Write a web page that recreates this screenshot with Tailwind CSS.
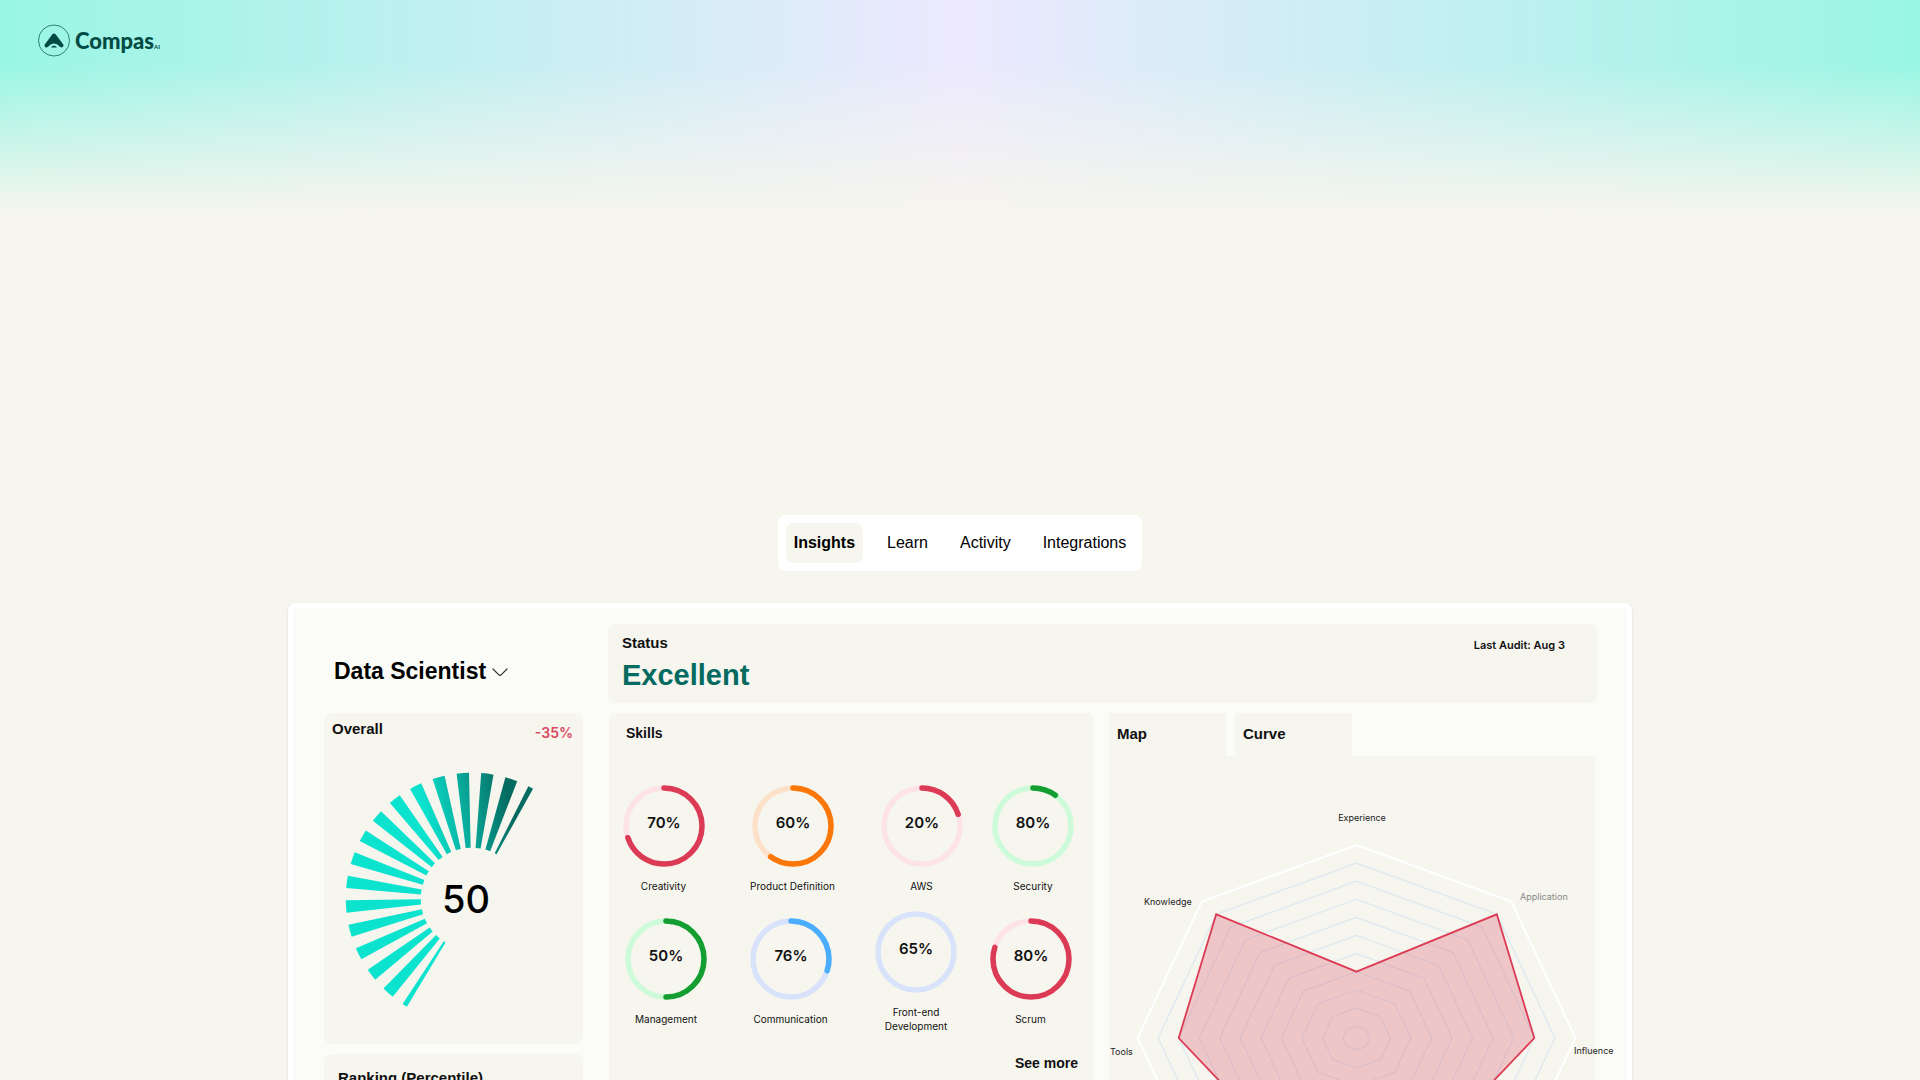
<!DOCTYPE html>
<html lang="en">
  <head>
    <meta charset="UTF-8" />
    <meta name="viewport" content="width=device-width, initial-scale=1.0" />
    <script src="https://cdn.jsdelivr.net/npm/@tailwindcss/browser@4"></script>
    <title>Compas AI</title>
  </head>
  <body class="bg-[#f6f5ee] font-['Liberation_Sans',sans-serif] text-black">
    <div class="h-[515px] bg-[linear-gradient(to_bottom,transparent_65px,#f6f5ee_213px),linear-gradient(to_right,#99f6e4,#ede9fe,#99f6e4)]">
      <header class="flex items-center px-[37px] py-6">
        <a href="#" class="flex items-center gap-1 text-[#024b45]">
          <svg class="size-[34px]" viewBox="0 0 34 34" fill="none">
            <circle cx="17" cy="16.5" r="15.5" stroke="currentColor" stroke-width="0.7" />
            <path d="M9.5 21.5 17 11.5 24.5 21.5Q17 13.5 9.5 21.5z" fill="currentColor" stroke="currentColor" stroke-width="4" stroke-linecap="round" stroke-linejoin="round" />
            <path d="M14.2 23.6c.6-2.6 5-2.6 5.6 0z" fill="currentColor" />
          </svg>
          <span class="flex items-baseline font-['Lato',sans-serif]">
            <span class="text-[22px] leading-8 font-black">Compas</span>
            <span class="text-[6px] font-bold">AI</span>
          </span>
        </a>
      </header>
    </div>

    <nav class="mx-auto mb-8 flex w-fit gap-4 rounded-lg bg-white p-2">
      <button class="h-10 rounded-lg bg-[#f6f5ee] px-2 font-bold">Insights</button>
      <button class="h-10 rounded-lg px-2">Learn</button>
      <button class="h-10 rounded-lg px-2">Activity</button>
      <button class="h-10 rounded-lg px-2">Integrations</button>
    </nav>

    <main class="mx-auto grid w-[70%] grid-cols-[259fr_989fr] gap-x-[25px] rounded-lg border-5 border-white bg-[#fbfcf7] pt-4 pr-[30px] pb-8 pl-[31px] shadow-sm">
      <!-- left column -->
      <div class="flex flex-col gap-[10px]">
        <button class="flex h-[79px] items-center gap-1 pt-4 pl-[10px]">
          <span class="text-[23px] font-bold">Data Scientist</span>
          <svg class="h-4 w-5" viewBox="0 0 20 16" fill="none" stroke="#333" stroke-width="1.2" stroke-linecap="round">
            <path d="M3 5 8.6 10.6Q10 12 11.4 10.6L17 5" />
          </svg>
        </button>

        <section class="h-[331px] rounded-lg bg-[#f6f5ee]">
          <div class="flex items-start justify-between px-2 pt-1">
            <h2 class="text-[15px] leading-6 font-bold text-[#111]">Overall</h2>
            <span class="pt-1 pr-[2px] font-['Inter',sans-serif] text-[14px] leading-6 font-semibold text-[#dc4a60]">-35%</span>
          </div>
          <svg class="mx-auto h-[270px] w-[259px]" viewBox="0 0 259 270">
            <defs>
              <linearGradient id="gauge" gradientUnits="userSpaceOnUse" x1="100" y1="66" x2="184" y2="50">
                <stop offset="0" stop-color="#0be3cf" />
                <stop offset="1" stop-color="#056a60" />
              </linearGradient>
            </defs>
            <path d="M190.8 76.4A88.5 88.5 0 0 0 102.2 229.6" pathLength="180" fill="none" stroke="url(#gauge)" stroke-width="75" stroke-dasharray="5.7 5.6" stroke-dashoffset="3.2" />
            <text x="142" y="168" text-anchor="middle" class="font-['Inter',sans-serif] text-[38px] font-medium">50</text>
          </svg>
        </section>

        <section class="h-40 rounded-lg bg-[#f6f5ee] px-[14px] pt-3">
          <h2 class="text-[15px] leading-6 font-bold text-[#111]">Ranking (Percentile)</h2>
        </section>
      </div>

      <!-- right column -->
      <div class="flex flex-col gap-[10px]">
        <section class="flex h-[79px] items-start justify-between rounded-lg bg-[#f6f5ee] pr-8 pl-[14px]">
          <div>
            <h2 class="pt-[9px] text-[15px] leading-5 font-bold text-[#111]">Status</h2>
            <p class="pt-1 text-[29px] leading-9 font-bold text-[#056a60]">Excellent</p>
          </div>
          <p class="pt-[13px] font-['Inter',sans-serif] text-[11px] leading-4 font-semibold text-[#111]">Last Audit: Aug 3</p>
        </section>

        <div class="grid grow grid-cols-[485fr_486fr] gap-x-[15px] pr-[2px] pl-px">
          <section class="rounded-lg bg-[#f6f5ee] font-['Inter',sans-serif] text-[#111]">
            <h2 class="pt-[10px] pl-[17px] font-['Liberation_Sans',sans-serif] text-[14px] leading-5 font-bold">Skills</h2>
            <div id="skills_top" class="grid grid-cols-[109fr_149fr_109fr_114fr] items-center pt-[42px] pr-1"></div>
            <div id="skills_bottom" class="grid grid-cols-[114fr_135fr_116fr_113fr] items-center pt-[18px] pr-[7px]"></div>
            <div class="flex justify-end pt-5 pr-4">
              <a href="#" class="font-['Liberation_Sans',sans-serif] text-[14px] leading-5 font-bold">See more</a>
            </div>
          </section>

          <section class="flex flex-col">
            <div class="flex gap-[9px] text-[15px] font-bold text-[#111]">
              <button class="h-[43px] w-[117px] bg-[#f6f5ee] px-2 text-left">Map</button>
              <button class="h-[43px] w-[117px] bg-[#f6f5ee] px-2 text-left">Curve</button>
            </div>
            <div class="grow bg-[#f6f5ee]">
              <svg class="h-auto w-full overflow-visible" viewBox="0 0 486 500">
                <g id="rings" fill="none"></g>
                <polygon id="score" fill="#dc3b55" fill-opacity="0.25" stroke="#dc3b55" stroke-width="1.8" />
                <g class="font-['Inter',sans-serif] text-[9px]" fill="#222">
                  <text x="253" y="65" text-anchor="middle">Experience</text>
                  <text x="411" y="144" fill="#888">Application</text>
                  <text x="465" y="298">Influence</text>
                  <text x="35" y="149">Knowledge</text>
                  <text x="1" y="299">Tools</text>
                </g>
              </svg>
            </div>
          </section>
        </div>
      </div>
    </main>

    <script>
      const red = ["#dc3b55", "#fde3e5"];
      const orange = ["#fb7707", "#fde0c8"];
      const green = ["#149d30", "#cdfad8"];
      const blue = ["#4badff", "#d8e3fb"];

      // arc is the drawn part of the ring, in percent
      const topSkills = [
        { name: "Creativity", value: 70, arc: 70, color: red },
        { name: "Product Definition", value: 60, arc: 60, color: orange },
        { name: "AWS", value: 20, arc: 20, color: red },
        { name: "Security", value: 80, arc: 10, color: green },
      ];
      const bottomSkills = [
        { name: "Management", value: 50, arc: 50, color: green },
        { name: "Communication", value: 76, arc: 30, color: blue },
        { name: "Front-end<br />Development", value: 65, arc: 0, color: blue },
        { name: "Scrum", value: 80, arc: 80, color: red },
      ];

      function addSkills(id, skills) {
        document.getElementById(id).innerHTML = skills
          .map(
            ({ name, value, arc, color }) => `
          <div class="flex flex-col items-center">
            <svg class="size-[82px]" viewBox="0 0 82 82" fill="none" stroke-width="5.5">
              <circle cx="41" cy="41" r="38" stroke="${color[1]}" />
              ${arc ? `<circle cx="41" cy="41" r="38" stroke="${color[0]}" stroke-linecap="round" pathLength="100" stroke-dasharray="${arc} 100" transform="rotate(-90 41 41)" />` : ""}
              <text x="41" y="43" text-anchor="middle" fill="#111" stroke="none" class="text-[15px] font-semibold">${value}%</text>
            </svg>
            <p class="pt-3 text-center text-[10px] leading-[14px] whitespace-nowrap">${name}</p>
          </div>`
          )
          .join("");
      }
      addSkills("skills_top", topSkills);
      addSkills("skills_bottom", bottomSkills);

      // radar map, level 0 is the innermost ring
      function point(level, i) {
        const angle = (i * Math.PI) / 4;
        const x = 247.5 + (13.4 + 20.55 * level) * Math.sin(angle);
        const y = 282 - (12 + 18.1 * level) * Math.cos(angle);
        return x.toFixed(1) + "," + y.toFixed(1);
      }
      let rings = "";
      for (let level = 0; level <= 10; level++) {
        const points = [0, 1, 2, 3, 4, 5, 6, 7].map((i) => point(level, i)).join(" ");
        rings +=
          level === 10
            ? `<polygon points="${points}" stroke="#fff" stroke-width="2" />`
            : `<polygon points="${points}" stroke="#dae8f0" stroke-width="1.2" />`;
      }
      document.getElementById("rings").innerHTML = rings;
      document
        .getElementById("score")
        .setAttribute("points", [3, 9, 8, 6, 5, 6, 8, 9].map(point).join(" "));
    </script>
  </body>
</html>
